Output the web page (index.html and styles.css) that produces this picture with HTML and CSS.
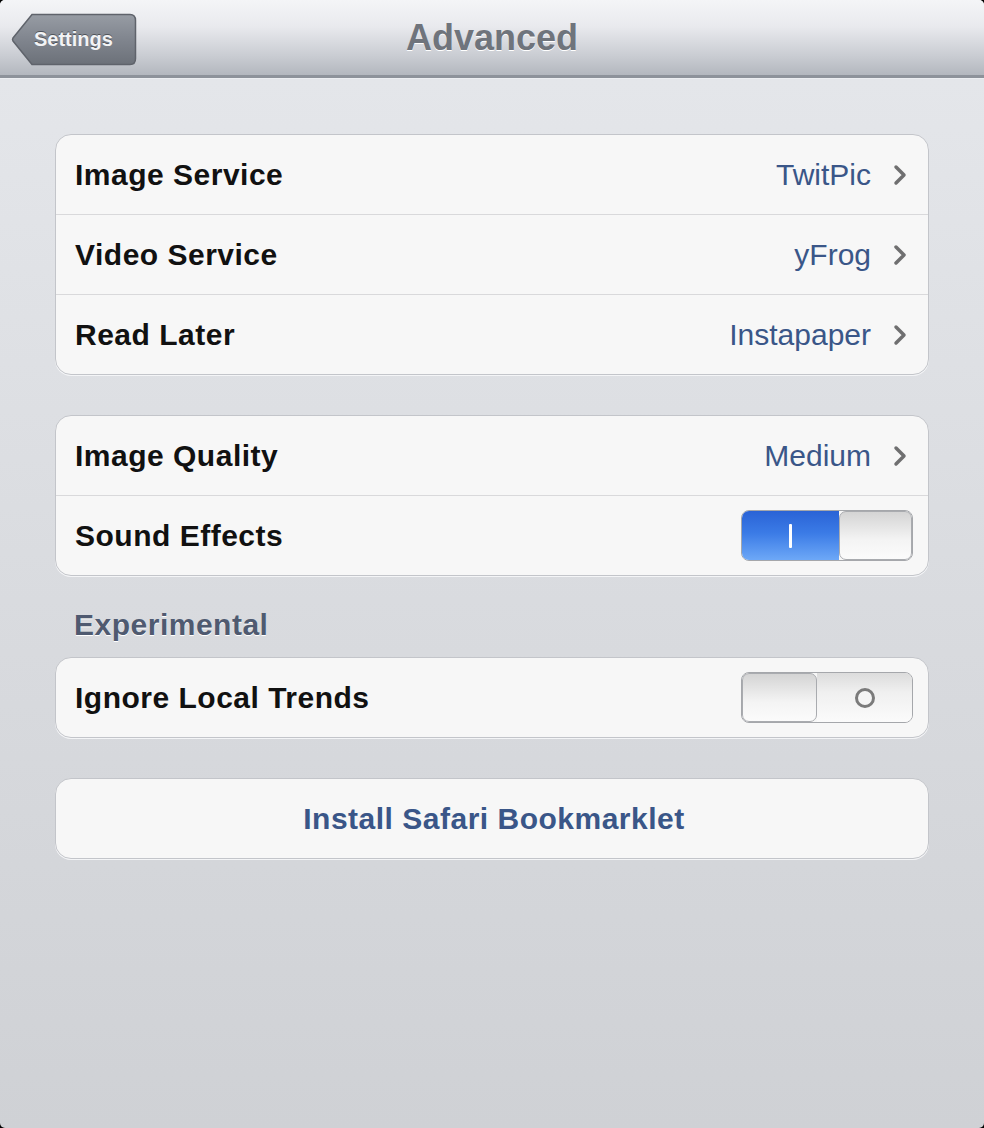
FILE: index.html
```html
<!DOCTYPE html>
<html lang="en">
<head>
    <meta charset="UTF-8">
    <meta name="viewport" content="width=device-width, initial-scale=1.0">
    <title>Advanced</title>
    <link rel="stylesheet" href="styles.css">
</head>
<body>

<div class="screen">
    <!-- Barra de navegación -->
    <div class="navbar">
        <a class="back" href="#">
            <svg class="back-shape" width="126" height="53" viewBox="0 0 126 53">
                <defs>
                    <linearGradient id="backGrad" x1="0" y1="0" x2="0" y2="1">
                        <stop offset="0" stop-color="#979ca4"/>
                        <stop offset="0.5" stop-color="#80858e"/>
                        <stop offset="1" stop-color="#6c7179"/>
                    </linearGradient>
                </defs>
                <path d="M21 1.5 H119 Q124.5 1.5 124.5 7.5 V45.5 Q124.5 51.5 119 51.5 H21 L2 28 Q1 26.5 2 25 Z"
                      fill="url(#backGrad)" stroke="#5f636b" stroke-width="1.5"/>
            </svg>
            <span class="back-label">Settings</span>
        </a>
        <h1 class="title">Advanced</h1>
        <div></div>
    </div>

    <div class="content">
        <div class="group">
            <div class="row">
                <span class="label">Image Service</span>
                <span class="value">TwitPic</span>
                <svg class="chevron" width="14" height="22" viewBox="0 0 14 22"><polyline points="3,3 11,11 3,19"/></svg>
            </div>
            <div class="row">
                <span class="label">Video Service</span>
                <span class="value">yFrog</span>
                <svg class="chevron" width="14" height="22" viewBox="0 0 14 22"><polyline points="3,3 11,11 3,19"/></svg>
            </div>
            <div class="row">
                <span class="label">Read Later</span>
                <span class="value">Instapaper</span>
                <svg class="chevron" width="14" height="22" viewBox="0 0 14 22"><polyline points="3,3 11,11 3,19"/></svg>
            </div>
        </div>

        <div class="group">
            <div class="row">
                <span class="label">Image Quality</span>
                <span class="value">Medium</span>
                <svg class="chevron" width="14" height="22" viewBox="0 0 14 22"><polyline points="3,3 11,11 3,19"/></svg>
            </div>
            <div class="row">
                <span class="label">Sound Effects</span>
                <div class="switch on">
                    <div class="track"><span class="mark-on"></span></div>
                    <div class="knob"></div>
                </div>
            </div>
        </div>

        <h2 class="section">Experimental</h2>
        <div class="group">
            <div class="row">
                <span class="label">Ignore Local Trends</span>
                <div class="switch off">
                    <div class="knob"></div>
                    <div class="track"><span class="mark-off"></span></div>
                </div>
            </div>
        </div>

        <div class="group">
            <div class="row row-center">
                <span class="action">Install Safari Bookmarklet</span>
            </div>
        </div>
    </div>
</div>

</body>
</html>
```

FILE: styles.css
```css
html { background: #000; }
body { margin: 0; font-family: "Liberation Sans", Arial, sans-serif; }
.screen { height: 1128px; overflow: hidden; border-radius: 5px; background: linear-gradient(#e4e6ea 80px, #d9dbdf 600px, #cfd1d5 1128px); }

/* Barra de navegación */
.navbar { height: 75px; display: grid; grid-template-columns: 1fr auto 1fr; align-items: center; border-bottom: 3px solid #8d929a; background: linear-gradient(#f4f5f7 0%, #e9eaee 35%, #c9ccd2 75%, #b3b7be 100%); box-shadow: 0 1px 0 #eceef1; }
.back { display: grid; width: 126px; height: 53px; margin: 3px 0 0 11px; text-decoration: none; }
.back > * { grid-area: 1 / 1; }
.back-label { align-self: center; padding-left: 23px; color: #f2f3f5; font-size: 20px; font-weight: bold; text-shadow: 0 -1px 0 #50545b; }
.title { margin: 0; color: #6f747c; font-size: 36px; font-weight: bold; text-shadow: 0 1px 0 #fff; }

/* Contenido */
.content { display: flex; flex-direction: column; padding: 56px 55px 0; }
.group { background: #f7f7f7; border: 1px solid #c3c5ca; border-radius: 16px; box-shadow: 0 1px 0 #f4f5f7; }
.group + .group { margin-top: 40px; }
.row { height: 79px; display: flex; align-items: center; padding: 0 15px 0 19px; border-bottom: 1px solid #d9d9db; }
.row:last-child { border-bottom: none; }
.label { flex: 1; color: #111; font-size: 30px; font-weight: bold; letter-spacing: 0.5px; }
.value { color: #3a5688; font-size: 30px; margin-right: 22px; }
.chevron { margin-right: 6px; }
.chevron polyline { fill: none; stroke: #6f6f70; stroke-width: 3.5; stroke-linecap: round; stroke-linejoin: round; }
.row-center { justify-content: center; }
.action { color: #3a5688; font-size: 30px; font-weight: bold; letter-spacing: 0.5px; }

.section { margin: 31px 0 14px 19px; height: 36px; line-height: 36px; color: #4f5a70; font-size: 30px; font-weight: bold; letter-spacing: 0.5px; text-shadow: 0 1px 0 #fff; }

/* Interruptores */
.switch { display: flex; width: 172px; height: 51px; border-radius: 8px; overflow: hidden; border: 1px solid #a5a7ab; box-sizing: border-box; }
.switch .track { flex: 1; display: flex; align-items: center; justify-content: center; }
.switch .knob { border-radius: 7px; background: linear-gradient(#d4d4d4, #f4f4f4 60%, #fbfbfb); border: 1px solid #a9abaf; box-sizing: border-box; }
.switch.on .track { background: linear-gradient(#2a63d6, #3b7be6 45%, #6da8f7); }
.switch.on .knob { width: 73px; }
.switch.off .knob { width: 75px; }
.switch.off .track { background: linear-gradient(#dcdcdc, #f0f0f0 40%, #fbfbfb); }
.mark-on { width: 3px; height: 24px; background: #fff; border-radius: 1px; }
.mark-off { width: 20px; height: 20px; border: 3px solid #7b7b7b; border-radius: 50%; box-sizing: border-box; background: #f5f5f5; }
```
